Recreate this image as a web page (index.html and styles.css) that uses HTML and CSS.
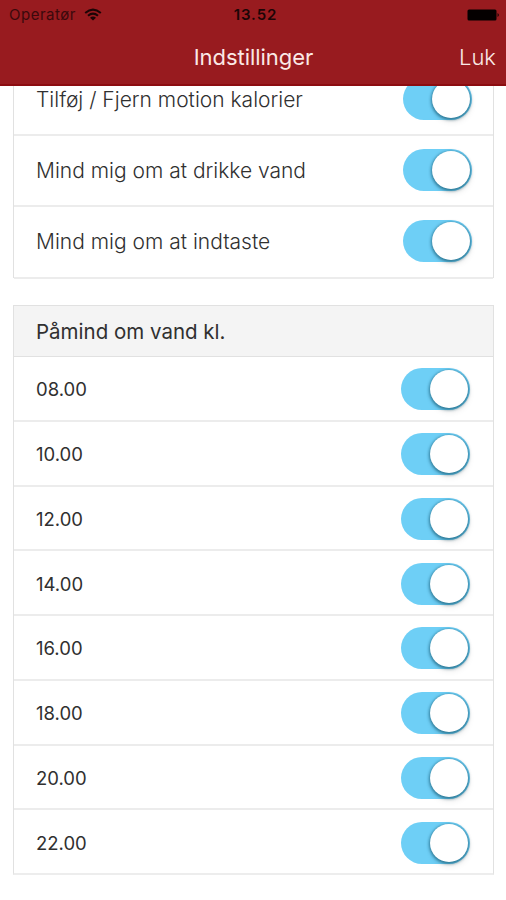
FILE: index.html
```html
<!DOCTYPE html>
<html lang="da">
<head>
<meta charset="utf-8">
<title>Indstillinger</title>
<link rel="stylesheet" href="styles.css">
</head>
<body>
<header class="header">
  <div class="status">
    <span class="carrier">Operatør
      <svg class="wifi" width="18" height="13" viewBox="0 0 18 13" fill="none" stroke="#1c0506" stroke-width="2"><path d="M1.2 5Q9-1.8 16.8 5M4 7.8Q9 3.4 14 7.8"/><path d="M6 9.7Q9 7.4 12 9.7L9 12.6Z" fill="#1c0506" stroke="none"/></svg>
    </span>
    <span class="clock">13.52</span>
    <svg class="battery" width="34" height="12" viewBox="0 0 34 12"><rect x="1.5" y="0.5" width="29" height="11" rx="1.5" fill="#050000"/><path d="M31.5 4Q34.5 6 31.5 8Z" fill="#250507"/></svg>
  </div>
  <nav class="nav"><h1 class="title">Indstillinger</h1><span class="close">Luk</span></nav>
</header>
<main class="content">
  <section class="card options">
    <div class="row"><span class="label">Tilføj / Fjern motion kalorier</span><span class="toggle"></span></div>
    <div class="row"><span class="label">Mind mig om at drikke vand</span><span class="toggle"></span></div>
    <div class="row"><span class="label">Mind mig om at indtaste</span><span class="toggle"></span></div>
  </section>
  <section class="card times">
    <h2 class="heading">Påmind om vand kl.</h2>
    <div class="row"><span class="label">08.00</span><span class="toggle"></span></div>
    <div class="row"><span class="label">10.00</span><span class="toggle"></span></div>
    <div class="row"><span class="label">12.00</span><span class="toggle"></span></div>
    <div class="row"><span class="label">14.00</span><span class="toggle"></span></div>
    <div class="row"><span class="label">16.00</span><span class="toggle"></span></div>
    <div class="row"><span class="label">18.00</span><span class="toggle"></span></div>
    <div class="row"><span class="label">20.00</span><span class="toggle"></span></div>
    <div class="row"><span class="label">22.00</span><span class="toggle"></span></div>
  </section>
</main>
</body>
</html>
```
FILE: styles.css
```css
* { box-sizing: border-box; }
body {
  margin: 0;
  height: 900px;
  overflow: hidden;
  background: #fff;
  color: #303030;
  font-family: Inter, "Liberation Sans", sans-serif;
}
.header {
  height: 86px;
  background: #981b1f;
  border-bottom: 2px solid #8c0c10;
}
.status {
  height: 29px;
  padding: 0 6px 0 9px;
  display: grid;
  grid-template-columns: 1fr auto 1fr;
  align-items: center;
  color: #1c0506;
  font-size: 15px;
}
.carrier { display: flex; align-items: center; gap: 8px; color: #3b090c; letter-spacing: 0.5px; }
.clock { padding-left: 2px; font-weight: 600; font-size: 15px; letter-spacing: 0.9px; }
.battery { justify-self: end; }
.nav {
  height: 56px;
  padding: 0 10px;
  display: grid;
  grid-template-columns: 1fr auto 1fr;
  align-items: center;
  color: #fbe9e6;
}
.title { grid-column: 2; margin: 0; padding-left: 1px; font-size: 22px; font-weight: 400; letter-spacing: -0.05px; }
.close { justify-self: end; font-size: 22px; font-weight: 300; }
.content { height: 814px; padding: 0 12px 0 13px; overflow: hidden; }
.card { border: 1px solid #e1e1e1; }
.options { margin-top: -22px; height: 214px; }
.times { margin-top: 27px; height: 570px; border-bottom: 2px solid #ededed; }
.heading {
  height: 51px;
  margin: 0;
  padding: 1px 0 0 22px;
  background: #f4f4f4;
  border-bottom: 1px solid #e1e1e1;
  font-size: 20.5px;
  font-weight: 400;
  line-height: 50px;
}
.row {
  display: flex;
  align-items: center;
  justify-content: space-between;
  border-bottom: 2px solid #ececec;
}
.options .row { height: 71.2px; padding: 0 21px 2px 22px; }
.times .row { height: 64.75px; padding: 2px 23px 0 22px; }
.times .row:last-child { border-bottom: 0; padding-top: 0; }
.label { padding-top: 1px; font-size: 21px; font-weight: 300; white-space: nowrap; }
.times .label { padding-top: 0; font-size: 18.5px; font-weight: 400; }
.toggle {
  width: 69px;
  height: 42px;
  padding: 2px;
  border-radius: 21px;
  background: #6ecff6;
  display: flex;
  justify-content: flex-end;
}
.toggle::after {
  content: "";
  width: 38px;
  height: 38px;
  border-radius: 50%;
  background: #fff;
  box-shadow: 0 1px 3px 1px rgba(0, 65, 90, 0.55), 1px 4px 6px rgba(0, 0, 0, 0.08);
}
```
